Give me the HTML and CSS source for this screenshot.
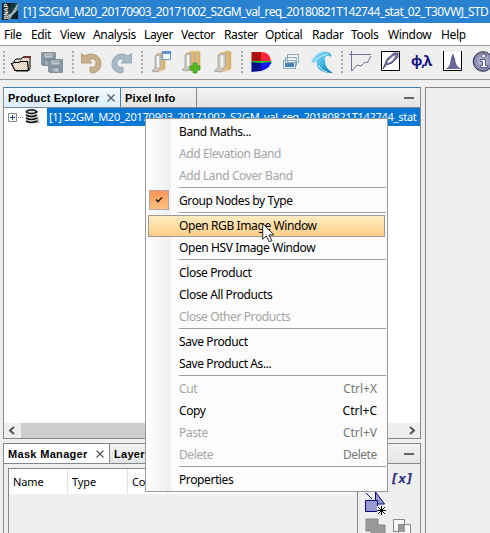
FILE: index.html
```html
<!DOCTYPE html>
<html lang="en">
<head>
<meta charset="utf-8">
<title>SNAP</title>
<link rel="stylesheet" href="styles.css">
</head>
<body>
<header class="title">
<svg class="logo" width="18" height="18" viewBox="0 0 18 18"><defs><linearGradient id="space" x2="1" y2="1"><stop offset="0" stop-color="#07131a"/><stop offset=".48" stop-color="#214b52"/><stop offset=".54" stop-color="#c5d9d5"/><stop offset=".64" stop-color="#132934"/><stop offset="1" stop-color="#080c18"/></linearGradient></defs><path fill="#202429" d="M0 0h6v17H0z"/><path fill="url(#space)" d="M6 0h10v16H6z"/><path d="M6 12Q11 10 16 4v2Q12 12 6 14" fill="#9dbcc0"/><text class="logo-text" transform="translate(5.5 16.5) rotate(-90)" textLength="16">SNAP</text></svg>
<span class="title-text">[1] S2GM_M20_20170903_20171002_S2GM_val_req_20180821T142744_stat_02_T30VWJ_STD</span>
</header>
<nav class="menubar"><span class="w27">File</span><span class="w29">Edit</span><span class="w33">View</span><span class="w51">Analysis</span><span class="w37">Layer</span><span class="w43">Vector</span><span class="w41">Raster</span><span class="w47">Optical</span><span class="w39">Radar</span><span class="w37">Tools</span><span class="w53">Window</span><span>Help</span></nav>
<div class="toolbar">
<svg width="490" height="33" viewBox="0 46 490 33">
<defs>
<linearGradient id="gold"><stop stop-color="#fbe3ae"/><stop offset=".5" stop-color="#ecc988"/><stop offset="1" stop-color="#d7a65c"/></linearGradient>
<linearGradient id="wave" x2="1" y2="1"><stop stop-color="#a9e7fb"/><stop offset=".55" stop-color="#40b5e3"/><stop offset="1" stop-color="#0874ad"/></linearGradient>
<radialGradient id="info"><stop stop-color="#d0d0e4"/><stop offset="1" stop-color="#7777a6"/></radialGradient>
<pattern id="check" width="2" height="2" patternUnits="userSpaceOnUse"><path fill="#fff" d="M0 0h2v2H0z"/><path fill="#d9b89a" d="M0 0h1v1H0zM1 1h1v1H1z"/></pattern>
<g id="paperfolder"><path fill="url(#gold)" stroke="#d6b880" stroke-width=".7" d="M5 2l7-2 2 1v16l-7 3-2-1z"/><path fill="#c9c9c6" stroke="#96938c" stroke-width=".7" d="M4 4l6-2v13l-4 5-5-1 3-3z"/><path stroke="#f4f4f2" stroke-width="2" d="M7 4v11" fill="none"/></g>
</defs>
<g stroke="#aaa" stroke-width="2" stroke-dasharray="2 2"><path d="M4 51v22M73 51v22M142 51v22M242 51v22M342 51v22"/></g>
<g><path d="M14 61l2-2h5l2-2h7v12l-2 2H16z" fill="url(#check)" stroke="#000" stroke-width="1"/><path d="M11.500 63.500l3-1h4l2-1h7l1 9H15z" fill="url(#check)" stroke="#000" stroke-width="1.200"/><path d="M23 57l2-1h6v2h-8z" fill="#74302b"/></g>
<g fill="#8699a6" stroke="#738591" stroke-width=".7"><path d="M41.500 52.500h14v13h-13l-1-1z"/><path fill="#c4cbd0" d="M44 53h9v5h-9zM45 61h7v4h-7z"/><path d="M46 55h6M47 62v3"/><path d="M48.500 59.500h14v13h-13l-1-1z"/><path fill="#c4cbd0" d="M51 60h9v5h-9zM52 68h7v4h-7z"/><path d="M53 62h6M54 69v3"/></g>
<path d="M81.500 53.500l3.500 2.500c5-4 16-2 16 8 0 5-4 9-9 9l-2-1v-5c4 1 6-1 6-4 0-4-4-5-7-3l3 3H81.500z" fill="#c7b08c" stroke="#b79d78"/>
<path d="M131.500 53.500l-3.500 2.500c-5-4-16-2-16 8 0 5 4 9 9 9l2-1v-5c-4 1-6-1-6-4 0-4 4-5 7-3l-3 3h10.500z" fill="#a7bac5" stroke="#91aabb"/>
<use href="#paperfolder" x="151" y="52"/><path fill="#f8fcff" stroke="#6e9bd0" d="M162.500 51.500h8v8h-8z"/><path fill="#5f91d4" d="M162 51h9v3h-9z"/>
<use href="#paperfolder" x="186" y="51"/><use href="#paperfolder" x="181" y="51"/><path fill="#58b91f" stroke="#379522" stroke-width=".7" d="M193 63h4v3h3v4h-3v3h-4v-3h-3v-4h3z"/>
<g transform="translate(213 51) scale(1.28 1.050)"><use href="#paperfolder"/></g>
<path fill="#ad1010" d="M251.500 52h10v10h-10z"/><path fill="#ff2338" d="M261 52c6 0 9 3 10 9l-10 1z"/><path fill="#20cf23" d="M251.500 61h20v3h-20z"/><path fill="#07128a" d="M251.500 62l10 1v8l-10 1z"/><path fill="#1717ff" d="M261 63l10-1c-1 5-4 7-10 9z"/>
<g fill="#edf5f7" stroke="#8cabb3"><path d="M287.500 54.500h11v8h-11zM285.500 57.500h11v8h-11zM283.500 60.500h12v8h-12z"/><path fill="#4c80bc" stroke="none" d="M285 63h9v4h-9z"/></g>
<path d="M311 62c4-8 11-12 17-10 3 1 4 3 3 5-4-3-7 0-6 4 0 5 3 9 8 12-12 0-17-4-16-12-1 1-3 2-6 1z" fill="url(#wave)"/><path d="M314 61q7-6 14-7M319 65q1 5 8 7" stroke="#c7f5ff" fill="none"/>
<g fill="none" stroke="#71719e"><path d="M351.500 51v20M349 54.500h22M352 71l5-6 4 1 4-4 2 1 4-7"/></g>
<path fill="#fff" stroke="#000" d="M381.500 51.500h18v19h-18z"/><path fill="#71719e" stroke="#54547c" d="M383 69l4-10 7-6h4v4l-6 6-6 2z"/><path fill="#fff" d="M387 62l5-5 4-2-4 6-4 2z"/>
<text class="phi" x="411" y="66" textLength="21">φ,λ</text>
<path fill="#fff" d="M444 52h18v18h-18z"/><path fill="#666698" d="M445 69c5-2 5-5 6-11l2-5 2 6c1 6 2 8 7 10z"/><path fill="none" stroke="#000" d="M443.500 51v19.500h18V51"/>
<circle cx="483" cy="61.500" r="9.800" fill="url(#info)" stroke="#34344a"/><circle cx="483.500" cy="56" r="2" fill="#fff" stroke="#555584"/><path d="M480.500 59.500h5v6h2v2h-7v-2h2v-4h-2z" fill="#fff" stroke="#555584"/>
</svg>
</div>
<main class="workspace">
<div class="left">
<section class="panel explorer">
<div class="tabs"><div class="tab selected"><span class="product-tab">Product Explorer</span><svg class="close" width="8" height="8"><path d="M.5.500l7 7m0-7l-7 7"/></svg></div><div class="tab pixel"><span>Pixel Info</span></div><i class="minimize"></i></div>
<div class="treeline"><svg width="43" height="18" viewBox="0 0 43 18"><path fill="#f8f8f8" stroke="#888" d="M4.500 5.500h8v8h-8z"/><path d="M6 9.500h5M8.500 7v5" stroke="#17498b"/><path d="M14 9.500h6" stroke="#888" stroke-dasharray="1 1"/><path d="M28 15l6-7 1 4v3z" fill="#aaa"/><path d="M22 4c2-3 9-3 11 0v9c-3 2-8 2-11 0z" fill="#ddd"/><path d="M22 4c2-3 9-3 11 0-3 2-8 2-11 0m0 3q5 3 11 0m-11 3q5 3 11 0m-11 3q5 3 11 0" fill="none" stroke="#111" stroke-width="1.500"/></svg><div class="product"><span>[1] S2GM_M20_20170903_20171002_S2GM_val_req_20180821T142744_stat</span></div></div>
<div class="tree-space"></div>
<div class="scroll"><svg width="17" height="15"><path d="M10 4L6 7.500l4 3.500"/></svg><i></i><svg width="17" height="15"><path d="M7 4l4 3.500L7 11"/></svg></div>
</section>
<section class="panel masks">
<div class="tabs"><div class="tab mask-tab"><span>Mask Manager</span><svg class="close" width="8" height="8"><path d="M.5.500l7 7m0-7l-7 7"/></svg></div><div class="tab layer"><span>Layer</span></div><i class="minimize"></i></div>
<div class="mask-body"><div class="table"><div class="headings"><span>Name</span><span>Type</span><span>Co</span><span></span></div></div>
<svg width="62" height="69" viewBox="358 464 62 69"><text class="math" x="392" y="483" textLength="20">[x]</text><path d="M366 493l6 6" stroke="#08087a"/><path d="M375.500 492l9 12h-9z" fill="#9999ce" stroke="#08087a"/><path fill="#9999d2" stroke="#08087a" d="M365.500 500.500h12v11h-12z"/><path fill="#efefef" d="M377 506h8v8h-8z"/><path d="M378 507l7 7m0-7l-7 7M377 510.500h9M381.500 506v9" stroke="#000"/><path d="M366 519h12v6h7v10h-14v-4h-5z" fill="#999" stroke="#888"/><path d="M393.500 519.500h11v12h-11zM398.500 524.500h12v12h-12z" fill="#f8f8f8" stroke="#888"/><path fill="#999" d="M399 525h6v7h-6z"/></svg></div>
</section>
</div>
<section class="canvas"></section>
</main>
<div class="popup" role="menu">
<div class="item"><span>Band Maths...</span></div><div class="item disabled"><span>Add Elevation Band</span></div><div class="item disabled"><span>Add Land Cover Band</span></div><hr>
<div class="item"><i class="check"><svg width="8" height="8"><path d="M1 3.500l2 2L7 1.500"/></svg></i><span>Group Nodes by Type</span></div><hr>
<div class="item hot"><span>Open RGB Image Window</span></div><div class="item"><span>Open HSV Image Window</span></div><hr>
<div class="item"><span>Close Product</span></div><div class="item"><span>Close All Products</span></div><div class="item disabled"><span>Close Other Products</span></div><hr>
<div class="item"><span>Save Product</span></div><div class="item"><span>Save Product As...</span></div><hr>
<div class="item disabled"><span>Cut</span><kbd>Ctrl+X</kbd></div><div class="item"><span>Copy</span><kbd>Ctrl+C</kbd></div><div class="item disabled"><span>Paste</span><kbd>Ctrl+V</kbd></div><div class="item disabled"><span>Delete</span><kbd class="delete">Delete</kbd></div><hr>
<div class="item"><span>Properties</span></div>
</div>
<svg class="pointer" width="14" height="20" viewBox="0 0 14 20"><path d="M.7.700v15.600l3.600-3.500 3 6 2.600-1.200-3-5.700H12z" fill="#fff" stroke="#20242b"/></svg>
</body>
</html>
```

FILE: styles.css
```css
* { box-sizing: border-box; }
html, body { width: 490px; height: 533px; margin: 0; overflow: hidden; }
body { position: relative; background: #efefef; color: #000; font: 12px "Noto Sans", sans-serif; }
svg { display: block; flex-shrink: 0; }
.title { height: 23px; background: #2882cf; display: flex; align-items: center; color: #fff; white-space: nowrap; }
.logo { margin-left: 2px; }
.logo-text { font: bold 6px "Liberation Sans", sans-serif; fill: #fff; }
.title-text { margin-left: 3px; font-size: 12px; letter-spacing: -.62px; }
.menubar { height: 22px; background: #fff; padding: 1px 0 0 4px; display: flex; font-size: 12px; line-height: 21px; letter-spacing: -.35px; }
.w27 { width: 27px; } .w29 { width: 29px; } .w33 { width: 33px; } .w51 { width: 51px; } .w37 { width: 37px; } .w43 { width: 43px; } .w41 { width: 41px; } .w47 { width: 47px; } .w39 { width: 39px; } .w53 { width: 53px; }
.toolbar { height: 35px; border-top: 1px solid #999; border-bottom: 1px solid #999; }
.phi { font: bold 14px "Noto Sans", sans-serif; fill: #14147e; }
.workspace { height: 453px; padding: 7px 0 0 3px; display: grid; grid-template-columns: 418px 1fr; gap: 4px; }
.left { display: flex; flex-direction: column; gap: 4px; }
.panel { border: 1px solid #828790; background: #fff; }
.explorer { height: 352px; border-top-color: #4580aa; display: flex; flex-direction: column; }
.tabs { height: 20px; border-bottom: 1px solid #828790; background: linear-gradient(#f2f2f2, #e5e5e5); display: flex; align-items: center; font: bold 11px "Liberation Sans", sans-serif; }
.tab { height: 19px; display: flex; align-items: center; padding-left: 4px; border-right: 1px solid #828790; white-space: nowrap; }
.selected { width: 117px; background: linear-gradient(#f3faff, #dceffc); border-color: #4580aa; justify-content: space-between; padding-right: 5px; }
.product-tab { letter-spacing: .13px; }
.pixel { width: 76px; letter-spacing: .14px; }
.close path { fill: none; stroke: #555; stroke-width: 1.2; }
.minimize { width: 10px; height: 2px; background: #666; margin-left: auto; margin-right: 6px; }
.treeline { height: 18px; display: flex; overflow: hidden; }
.product { height: 18px; flex: 1; background: #0878d7; color: #fff; font-size: 11px; line-height: 18px; white-space: nowrap; padding-left: 2px; letter-spacing: -.27px; }
.tree-space { flex: 1; }
.scroll { height: 15px; background: #efefef; display: flex; }
.scroll i { width: 367px; background: #cdcdcd; }
.scroll svg:last-child { margin-left: auto; }
.scroll path { fill: none; stroke: #555; stroke-width: 2; }
.masks { flex: 1; border-bottom: 0; background: #efefef; }
.mask-tab { width: 106px; background: #fff; justify-content: space-between; padding-right: 5px; letter-spacing: .32px; }
.layer { width: 90px; letter-spacing: .3px; }
.mask-body { display: flex; height: 69px; }
.table { margin: 4px 0 0 4px; width: 350px; border: solid #828790; border-width: 1px 1px 0; }
.headings { height: 25px; background: #fff; display: grid; grid-template-columns: 59px 60px 40px 1fr; line-height: 25px; font-size: 11px; letter-spacing: -.1px; }
.headings span { border-right: 1px solid #e4e4e4; padding-left: 4px; overflow: hidden; }
.math { font: italic bold 12px "DejaVu Sans", sans-serif; fill: #35358a; }
.canvas { border: solid #828790; border-width: 1px 0 0 1px; }
.popup { position: absolute; left: 145px; top: 118px; width: 243px; height: 374px; border: 1px solid #999; background: linear-gradient(90deg, #fff 0, #eee 25px, #fcfcfc 25px); padding: 2px 1px; }
.item { position: relative; height: 22px; padding: 0 9px 0 32px; display: flex; justify-content: space-between; align-items: center; line-height: 22px; white-space: nowrap; letter-spacing: -.4px; }
.popup hr { height: 1px; margin: 0 0 2px 32px; border: 0; background: #a0a0a0; }
.disabled { color: #a5a5a5; }
.disabled kbd { color: #777; }
kbd { font: inherit; letter-spacing: 0; }
.delete { letter-spacing: -.45px; width: 34px; }
.hot { border: 1px solid #a09b8c; background: linear-gradient(#ffecc2, #ffcf87); margin: 0 1px; height: 22px; padding-left: 30px; }
.check { position: absolute; left: 2px; top: 0; width: 20px; height: 20px; background: linear-gradient(#ff9555, #ffc080); border: 1px solid #aaa; display: flex; align-items: center; justify-content: center; }
.check path { fill: none; stroke: #222; stroke-width: 1.6; }
.pointer { position: absolute; left: 262px; top: 223px; }
```
